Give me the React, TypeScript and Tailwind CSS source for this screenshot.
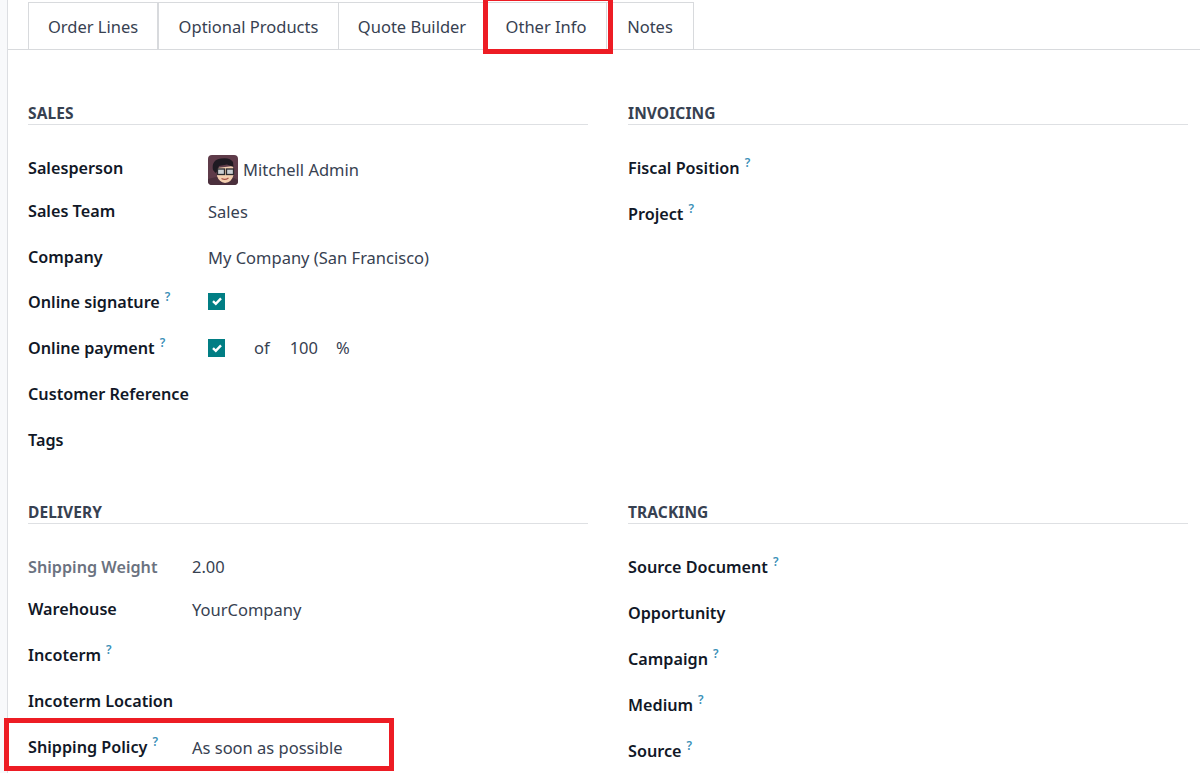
const FONT = "font-['Noto_Sans','Open_Sans',sans-serif]";

function Help() {
  return <sup className="relative -top-[7px] ml-[5px] align-baseline text-[12px] font-semibold leading-none text-[#3a8fb7]">?</sup>;
}

function Tab({ label, cls }: { label: string; cls: string }) {
  return (
    <div className={`flex h-[47px] items-center justify-center border border-b-0 border-[#d8dadd] pt-[2px] text-[#374151] ${cls}`}>
      {label}
    </div>
  );
}

function Check({ cls }: { cls: string }) {
  return (
    <span className={`flex w-[17px] items-center justify-center bg-[#017e84] ${cls}`}>
      <svg width="12" height="12" viewBox="0 0 12 12" fill="none">
        <path d="M2 6.2 L4.8 8.8 L10 3.4" stroke="#fff" strokeWidth="2.4" />
      </svg>
    </span>
  );
}

function Avatar() {
  return (
    <svg width="30" height="30" viewBox="0 0 30 30" className="mt-[4px] rounded-[4px]">
      <rect width="30" height="30" fill="#5e3b49" />
      <path d="M0 30 L0 24 L8 22 L24 22 L30 25 L30 30 Z" fill="#4a2f3c" />
      <path d="M9 13 L25 11 L25.5 20 Q24 27 17 28 Q11 27 9 21 Z" fill="#f3cfb0" />
      <path d="M5 15 Q3 5 13 3.5 Q22 2 25 7 L25.5 12 L19 9.5 L11 11 L9.5 16 L7.5 18 Z" fill="#1f1a22" />
      <rect x="9.5" y="14" width="7" height="5.5" fill="#c9ced2" stroke="#2a2a2e" strokeWidth="1.3" />
      <rect x="18.5" y="14" width="7" height="5.5" fill="#c9ced2" stroke="#2a2a2e" strokeWidth="1.3" />
      <path d="M13.5 23.5 Q17 25.5 20.5 23" stroke="#a8544a" strokeWidth="1.2" fill="none" />
    </svg>
  );
}

function Row({ label, help, h, muted, w, lab, children }: { label: string; help?: boolean; h: string; muted?: boolean; w: string; lab?: string; children?: React.ReactNode }) {
  return (
    <div className={`flex items-center ${h}`}>
      <div className={`shrink-0 whitespace-nowrap text-[16.2px] font-semibold ${w} ${lab ?? ""} ${muted ? "text-[#6b7280]" : "text-[#111827]"}`}>
        {label}
        {help && <Help />}
      </div>
      <div className="flex items-center text-[#374151]">{children}</div>
    </div>
  );
}

function Heading({ title }: { title: string }) {
  return (
    <div className="h-[24px] border-b border-[#dee0e3] pt-[1px] text-[15.5px] leading-[22px] font-bold tracking-[0.1px] text-[#374151]">
      {title}
    </div>
  );
}

export default function App() {
  return (
    <div className={`relative flex h-[773px] w-[1200px] overflow-hidden bg-white text-[16.5px] ${FONT}`}>
      <div className="h-full w-[8px] shrink-0 border-r border-[#dcdee2] bg-[#f8f9fb]" />
      <div className="flex-1">
        <div className="flex h-[50px] items-end border-b border-[#d8dadd] pl-[20px]">
          <Tab label="Order Lines" cls="w-[130px]" />
          <Tab label="Optional Products" cls="w-[181px]" />
          <Tab label="Quote Builder" cls="w-[147px] border-l-0" />
          <Tab label="Other Info" cls="w-[121px] border-l-0 text-[#111827]" />
          <Tab label="Notes" cls="w-[87px] border-l-0" />
        </div>
        <div className="grid w-[1180px] grid-cols-2 gap-x-[40px] pt-[51px] pl-[20px]">
          <div>
            <Heading title="SALES" />
            <div className="pt-[22px]">
              <Row label="Salesperson" h="h-[42px]" w="w-[180px]">
                <Avatar />
                <span className="ml-[5px] pt-[5px]">Mitchell Admin</span>
              </Row>
              <Row label="Sales Team" h="h-[45px]" w="w-[180px]"><span className="pt-[2px]">Sales</span></Row>
              <Row label="Company" h="h-[45px]" w="w-[180px]" lab="pt-[2px]"><span className="pt-[4px]">My Company (San Francisco)</span></Row>
              <Row label="Online signature" help h="h-[46px]" w="w-[180px]"><Check cls="mb-[2px] h-[17px]" /></Row>
              <Row label="Online payment" help h="h-[46px]" w="w-[180px]">
                <Check cls="h-[18px]" />
                <span className="ml-[29px]">of</span>
                <span className="ml-[20px]">100</span>
                <span className="ml-[18px]">%</span>
              </Row>
              <Row label="Customer Reference" h="h-[46px]" w="w-[180px]" />
              <Row label="Tags" h="h-[46px]" w="w-[180px]" />
            </div>
          </div>
          <div>
            <Heading title="INVOICING" />
            <div className="pt-[22px]">
              <Row label="Fiscal Position" help h="h-[42px]" w="w-[180px]" />
              <Row label="Project" help h="h-[50px]" w="w-[180px]" />
            </div>
          </div>
          <div className="pt-[37px]">
            <Heading title="DELIVERY" />
            <div className="pt-[21px]">
              <Row label="Shipping Weight" muted h="h-[44px]" w="w-[164px]"><span>2.00</span></Row>
              <Row label="Warehouse" h="h-[42px]" w="w-[164px]" lab="pb-[2px]"><span>YourCompany</span></Row>
              <Row label="Incoterm" help h="h-[48px]" w="w-[164px]" />
              <Row label="Incoterm Location" h="h-[44px]" w="w-[164px]" />
              <Row label="Shipping Policy" help h="h-[48px]" w="w-[164px]"><span className="pt-[2px]">As soon as possible</span></Row>
            </div>
          </div>
          <div className="pt-[37px]">
            <Heading title="TRACKING" />
            <div className="pt-[21px]">
              <Row label="Source Document" help h="h-[44px]" w="w-[180px]" />
              <Row label="Opportunity" h="h-[48px]" w="w-[180px]" />
              <Row label="Campaign" help h="h-[44px]" w="w-[180px]" />
              <Row label="Medium" help h="h-[48px]" w="w-[180px]" />
              <Row label="Source" help h="h-[44px]" w="w-[180px]" />
            </div>
          </div>
        </div>
      </div>
      <div className="absolute top-[-4px] left-[483px] h-[58px] w-[130px] border-[5px] border-[#ed1c24]" />
      <div className="absolute top-[718px] left-[4px] h-[53px] w-[390px] border-[5px] border-[#ed1c24]" />
    </div>
  );
}
